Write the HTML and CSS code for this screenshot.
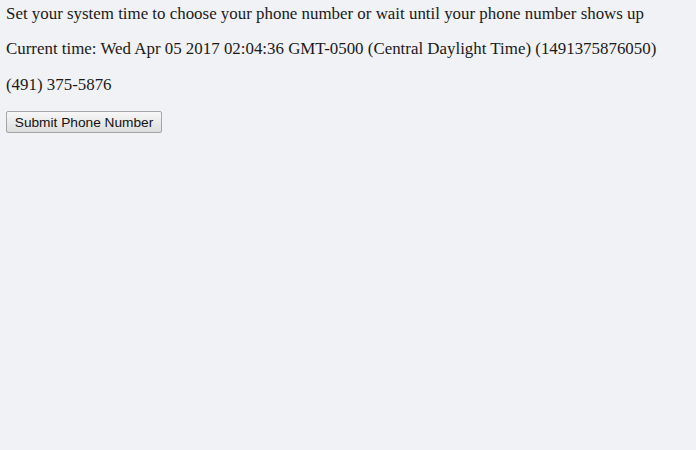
FILE: index.html
```html
<!DOCTYPE html>
<html>
<head>
<meta charset="utf-8">
<link rel="stylesheet" href="styles.css">
</head>
<body class="page">
<p class="line">Set your system time to choose your phone number or wait until your phone number shows up</p>
<p class="line">Current time: Wed Apr 05 2017 02:04:36 GMT-0500 (Central Daylight Time) (1491375876050)</p>
<p class="line last">(491) 375-5876</p>
<button class="submit">Submit Phone Number</button>
</body>
</html>
```
FILE: styles.css
```css
html { background: #f1f2f6; }
.page {
  margin: 0;
  padding: 3.5px 6px;
  font-family: "Liberation Serif", serif;
  font-size: 16.9px;
  color: #1a1a1a;
}
.line {
  margin: 0 0 16.5px 0;
  line-height: 19px;
}
.line.last { margin-bottom: 17.5px; }
.submit {
  display: block;
  font-family: "Liberation Sans", Arial, sans-serif;
  font-size: 13.7px;
  color: #111;
  background: linear-gradient(#f7f7f7, #dddddd);
  border: 1px solid #a5a5a5;
  border-radius: 2px;
  padding: 0;
  height: 22px;
  width: 156px;
}
```
